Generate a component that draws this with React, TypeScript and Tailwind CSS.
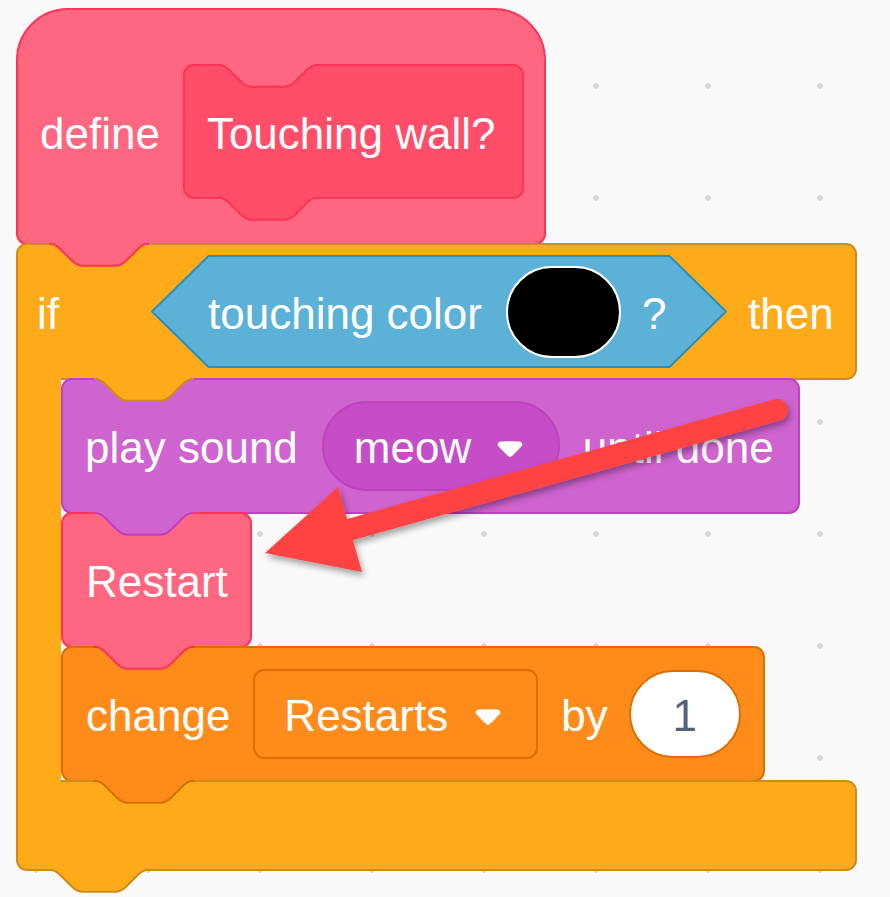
import React from "react";

const NOTCH_FILL =
  "M0,-1 V0 c2,0 3,1 4,2 l4,4 c1,1 2,2 4,2 h12 c2,0 3,-1 4,-2 l4,-4 c1,-1 2,-2 4,-2 V-1 Z";
const NOTCH_LINE =
  "M-0.2,0 H0 c2,0 3,1 4,2 l4,4 c1,1 2,2 4,2 h12 c2,0 3,-1 4,-2 l4,-4 c1,-1 2,-2 4,-2 H36.2";

type TabProps = { fill: string; stroke: string; className: string };

// the little tab a block hangs onto the one below it
const Tab = ({ fill, stroke, className }: TabProps) => (
  <svg
    className={`pointer-events-none absolute z-10 ${className}`}
    width="100"
    height="27"
    viewBox="-0.2 -1 36.4 9.8"
  >
    <path d={NOTCH_FILL} fill={fill} />
    <path d={NOTCH_LINE} fill="none" stroke={stroke} strokeWidth="0.75" />
  </svg>
);

const DropArrow = ({ className }: { className: string }) => (
  <svg className={className} width="30" height="20" viewBox="0 0 12.71 8.79">
    <path
      d="M6.36,7.79a1.43,1.43,0,0,1-1-.42L1.42,3.45a1.44,1.44,0,0,1,0-2c.56-.56,9.31-.56,9.870,0a1.44,1.44,0,0,1,0,2L7.37,7.37A1.43,1.43,0,0,1,6.36,7.79Z"
      fill="#fff"
    />
  </svg>
);

const DefineHat = () => (
  <div className="relative flex h-[237px] w-[530px] items-start rounded-tl-[52px] rounded-tr-[52px] rounded-bl-[11px] rounded-br-[11px] border-2 border-[#FF3355] bg-[#FF6680] pt-[54px]">
    <div className="flex items-center">
      <span className="mt-[4px] pl-[22px]">define</span>
      <div className="relative ml-[23px] flex h-[135px] w-[341px] items-center rounded-[11px] border-2 border-[#FF3355] bg-[#FF4D6A] pl-[22px]">
        <span className="mt-[4px]">Touching wall?</span>
        <Tab fill="#FF6680" stroke="#FF3355" className="left-[33px] top-[-4px]" />
        <Tab fill="#FF4D6A" stroke="#FF3355" className="left-[33px] top-[calc(100%-2px)]" />
      </div>
    </div>
    <Tab fill="#FF6680" stroke="#FF3355" className="left-[31px] top-[calc(100%-2px)]" />
  </div>
);

const TouchingColor = () => (
  <div className="relative ml-[92px] flex h-[113px] w-[576px] items-center pl-[57px]">
    <svg className="absolute left-0 top-0" width="576" height="113">
      <polygon
        points="1,56.5 57.5,1 518.5,1 575,56.5 518.5,112 57.5,112"
        fill="#5CB1D6"
        stroke="#2E8EB8"
        strokeWidth="2"
      />
    </svg>
    <span className="relative mt-[4px]">touching color</span>
    <div className="relative ml-[24px] h-[92px] w-[115px] rounded-full border-2 border-white bg-black" />
    <span className="relative ml-[21px] mt-[4px]">?</span>
  </div>
);

const PlaySound = () => (
  <div className="relative flex h-[136px] w-[739px] items-center rounded-[11px] border-2 border-[#BD42BD] bg-[#CF63CF] pl-[22px]">
    <span className="mt-[4px]">play sound</span>
    <div className="ml-[24px] flex h-[90px] w-[238px] items-center rounded-full border-2 border-[#BD42BD] bg-[#C54DC8] pl-[30px]">
      <span className="mt-[4px]">meow</span>
      <DropArrow className="ml-[24px] mt-[6px]" />
    </div>
    <span className="ml-[23px] mt-[4px]">until done</span>
    <Tab fill="#CF63CF" stroke="#BD42BD" className="left-[31px] top-[calc(100%-2px)]" />
  </div>
);

const Restart = () => (
  <div className="relative -mt-[2px] flex h-[136px] w-[191px] items-center rounded-[11px] border-2 border-[#FF3355] bg-[#FF6680] pl-[23px]">
    <span className="mt-[4px]">Restart</span>
    <Tab fill="#FF6680" stroke="#FF3355" className="left-[31px] top-[calc(100%-2px)]" />
  </div>
);

const ChangeBy = () => (
  <div className="relative -mt-[2px] flex h-[136px] w-[704px] items-center rounded-[11px] border-2 border-[#DB6E00] bg-[#FF8C1A] pl-[23px]">
    <span className="mt-[4px]">change</span>
    <div className="ml-[23px] flex h-[90px] w-[285px] items-center rounded-[11px] border-2 border-[#DB6E00] bg-[#FF8C1A] pl-[29px]">
      <span className="mt-[4px]">Restarts</span>
      <DropArrow className="ml-[25px] mt-[6px]" />
    </div>
    <span className="ml-[23px] mt-[4px]">by</span>
    <div className="ml-[21px] flex h-[88px] w-[112px] items-center justify-center rounded-full border-2 border-[#DB6E00] bg-white pt-[4px] text-[#575E75]">
      1
    </div>
    <Tab fill="#FF8C1A" stroke="#DB6E00" className="left-[31px] top-[calc(100%-2px)]" />
  </div>
);

const IfBlock = () => (
  <div className="-mt-[2px] flex flex-col">
    <div className="relative flex h-[137px] w-[841px] items-center rounded-tl-[11px] rounded-tr-[11px] rounded-br-[11px] border-2 border-[#CF8B17] bg-[#FFAB19]">
      <span className="mt-[4px] pl-[19px]">if</span>
      <TouchingColor />
      <span className="ml-[21px] mt-[4px]">then</span>
      <Tab fill="#FFAB19" stroke="#CF8B17" className="left-[76px] top-[calc(100%-2px)]" />
    </div>
    <div className="-my-[2px] flex">
      <div className="relative z-[1] w-[45px] border-l-2 border-[#CF8B17] bg-[#FFAB19]" />
      <div className="flex flex-col items-start">
        <PlaySound />
        <Restart />
        <ChangeBy />
      </div>
    </div>
    <div className="relative h-[91px] w-[841px] rounded-tr-[11px] rounded-bl-[11px] rounded-br-[11px] border-2 border-[#CF8B17] bg-[#FFAB19]">
      <Tab fill="#FFAB19" stroke="#CF8B17" className="left-[31px] top-[calc(100%-2px)]" />
    </div>
  </div>
);

const Arrow = () => (
  <svg className="pointer-events-none absolute left-0 top-0 z-20" width="890" height="897">
    <defs>
      <filter id="arrow-shadow" x="-10%" y="-20%" width="130%" height="150%">
        <feDropShadow dx="2" dy="4" stdDeviation="3" floodColor="#000" floodOpacity="0.35" />
      </filter>
    </defs>
    <g filter="url(#arrow-shadow)">
      <line x1="777" y1="410" x2="345" y2="531" stroke="#FF4343" strokeWidth="22" strokeLinecap="round" />
      <polygon points="265,553 338,487 362,572" fill="#FF4343" />
    </g>
  </svg>
);

export default function App() {
  return (
    <div className="relative h-[897px] w-full overflow-hidden bg-[#f9f9f9] [background-image:radial-gradient(circle,#d6d6d6_2.5px,transparent_3px)] [background-size:112px_112px] [background-position:-20px_30px] font-['Liberation_Sans',Arial,sans-serif] text-[44px] leading-none text-white">
      <div className="flex flex-col items-start pl-[16px] pt-[8px]">
        <DefineHat />
        <IfBlock />
      </div>
      <Arrow />
    </div>
  );
}
